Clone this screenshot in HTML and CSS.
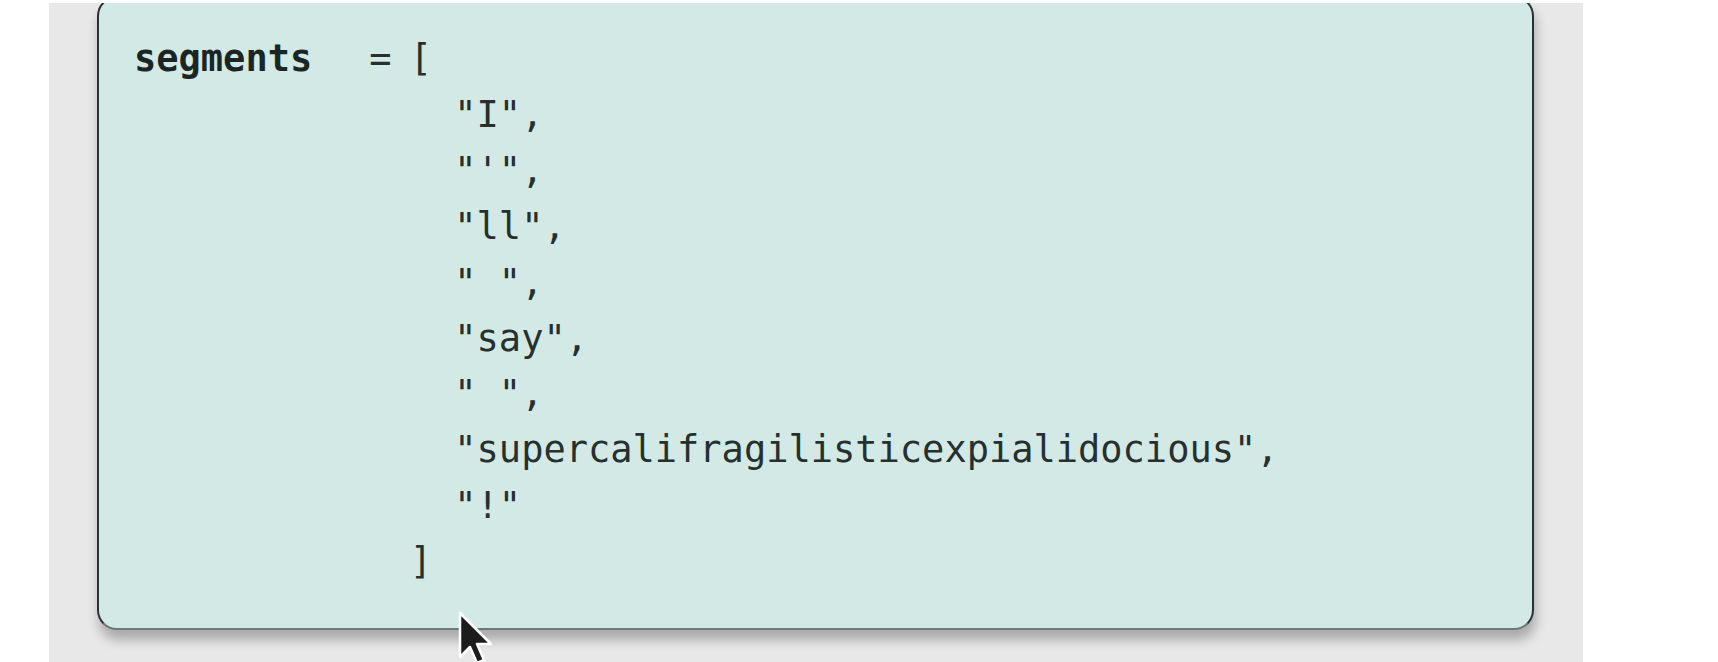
FILE: index.html
```html
<!DOCTYPE html>
<html>
<head>
<meta charset="utf-8">
<link rel="stylesheet" href="styles.css">
</head>
<body>
<div class="stage">
  <div class="card">
    <div class="code">
      <div class="name">segments</div>
      <div class="value"><div class="line"><span>=</span><span class="open">[</span></div><div class="line item">"I",</div><div class="line item">"'",</div><div class="line item">"ll",</div><div class="line item">" ",</div><div class="line item">"say",</div><div class="line item">" ",</div><div class="line item">"supercalifragilisticexpialidocious",</div><div class="line item">"!"</div><div class="line close">]</div></div>
    </div>
  </div>
  <svg class="pointer" width="40" height="60" viewBox="0 0 40 60">
    <path d="M2 2 L2 46 L12 36 L19 52 L26 49 L19 33 L33 33 Z" fill="#1c1c1c" stroke="#ffffff" stroke-width="2.5" stroke-linejoin="round"/>
  </svg>
</div>
</body>
</html>
```
FILE: styles.css
```css
html, body {
  margin: 0;
  padding: 0;
  background: #ffffff;
  overflow: hidden;
}

.stage {
  position: relative;
  margin: 3px 0 0 49px;
  width: 1534px;
  height: 659px;
  background: #e8e8e8;
  padding-left: 48px;
  box-sizing: border-box;
  overflow: hidden;
}

.card {
  margin-top: -7px;
  width: 1437px;
  box-sizing: border-box;
  background: #d3e9e6;
  border: 2px solid #2a3231;
  border-bottom-color: #6d7877;
  border-top-color: #6d7877;
  border-radius: 20px;
  padding: 33px 0 38px 35px;
  box-shadow: 2px 10px 12px rgba(0, 0, 0, 0.27);
}

.code {
  display: grid;
  grid-template-columns: auto 1fr;
  column-gap: 57px;
  font-family: "DejaVu Sans Mono", monospace;
  font-size: 37px;
  line-height: 55.9px;
  color: #25302f;
}

.name {
  font-weight: bold;
  color: #1b2624;
}

.line {
  white-space: pre;
}

.open {
  margin-left: calc(1ch - 4px);
}

.item {
  padding-left: calc(4ch - 4px);
}

.close {
  padding-left: calc(2ch - 4px);
}

.pointer {
  position: absolute;
  left: 409px;
  top: 608px;
}
```
